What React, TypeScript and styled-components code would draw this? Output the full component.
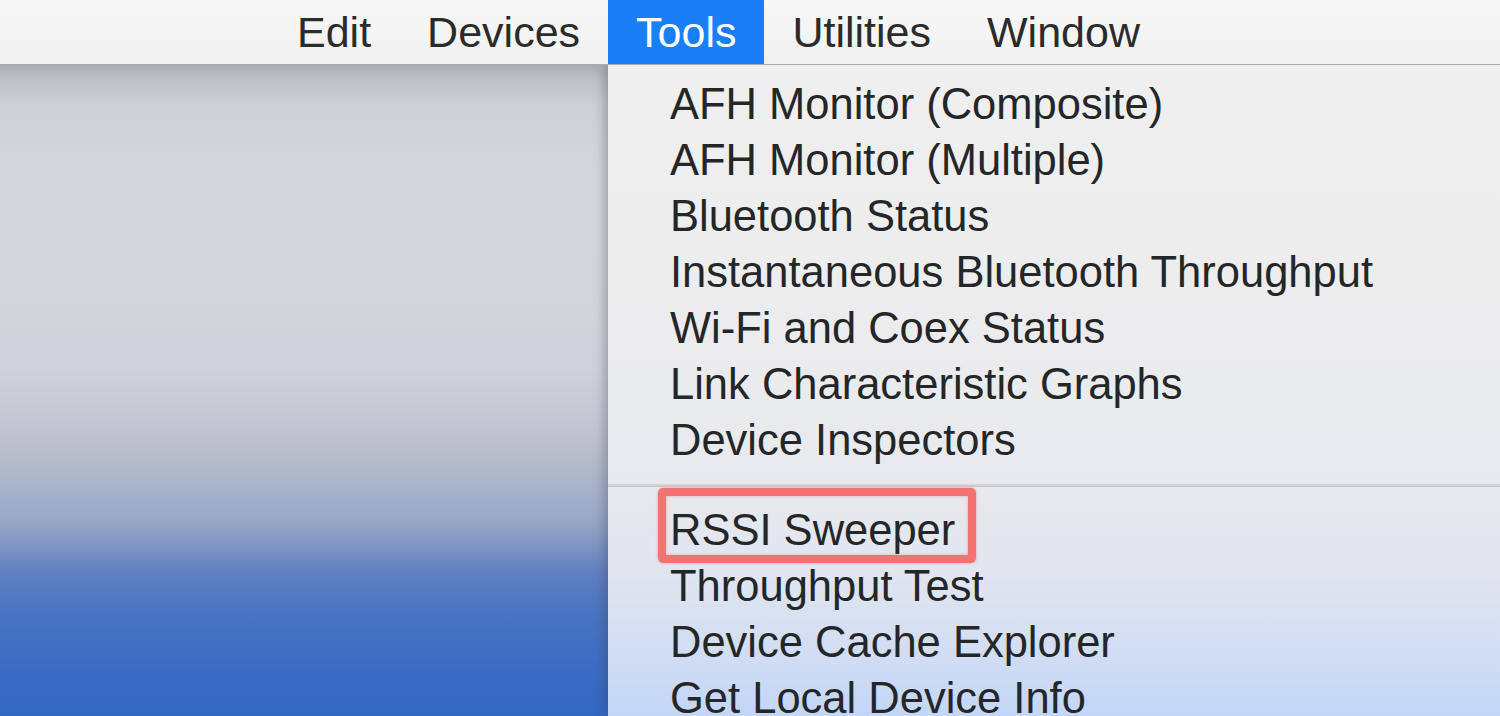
import React from "react";
import styled, { createGlobalStyle } from "styled-components";

const Global = createGlobalStyle`
  html, body { margin: 0; padding: 0; }
  body {
    width: 1500px;
    height: 716px;
    overflow: hidden;
    font-family: "Liberation Sans", Arial, Helvetica, sans-serif;
    background: #d3d5da;
  }
`;

const Screen = styled.div`
  width: 1500px;
  height: 716px;
  display: grid;
  grid-template-rows: 65px 1fr;
  overflow: hidden;
`;

const MenuBar = styled.nav`
  display: flex;
  align-items: stretch;
  padding-left: 269px;
  background: linear-gradient(#f7f7f7, #f1f1f1);
  border-bottom: 1px solid #a9a9ab;
  position: relative;
  z-index: 2;
`;

const MenuTitle = styled.div<{ $active?: boolean }>`
  padding: 0 28px;
  font-size: 43px;
  line-height: 64px;
  color: ${(p) => (p.$active ? "#ffffff" : "#2b2b2b")};
  background: ${(p) => (p.$active ? "#1a7ef5" : "transparent")};
  white-space: nowrap;
`;

const Body = styled.div`
  display: flex;
  min-height: 0;
  overflow: hidden;
`;

const Desktop = styled.div`
  flex: 0 0 608px;
  background: linear-gradient(
    to bottom,
    #abacb1 0px,
    #bfc0c4 14px,
    #cfd0d4 40px,
    #d6d7db 110px,
    #d4d6db 220px,
    #cfd2d9 300px,
    #c5c9d3 350px,
    #b8bdcb 390px,
    #a9b3c9 420px,
    #9aaac8 450px,
    #7f95c4 480px,
    #5f7fc0 509px,
    #4a74c2 548px,
    #3c6cc3 600px,
    #3268c3 651px
  );
`;

const Menu = styled.div`
  flex: 1;
  display: flex;
  flex-direction: column;
  padding-top: 11px;
  background: linear-gradient(
    to bottom,
    #efeff0 0px,
    #ededee 200px,
    #e9eaed 380px,
    #e6e8ee 450px,
    #e0e5ef 510px,
    #d5dff2 570px,
    #cadaf5 620px,
    #c3d6f7 651px
  );
  box-shadow: -4px 0 10px rgba(60, 64, 80, 0.35);
  position: relative;
  z-index: 1;
`;

const Item = styled.div`
  position: relative;
  flex: 0 0 56px;
  padding-left: 62px;
  font-size: 43.5px;
  line-height: 56px;
  color: #242628;
  white-space: nowrap;
`;

const Separator = styled.div`
  flex: 0 0 34px;
  display: flex;
  align-items: center;
  &::after {
    content: "";
    flex: 1;
    height: 3px;
    background: linear-gradient(#dadadd, #c8c8cc);
  }
`;

const Callout = styled.span`
  position: absolute;
  left: 50px;
  top: -14px;
  width: 318px;
  height: 75px;
  box-sizing: border-box;
  border: 8px solid #f37272;
  border-radius: 5px;
  box-shadow: 0 0 3px rgba(240, 100, 100, 0.6), inset 0 0 3px rgba(240, 100, 100, 0.5);
  pointer-events: none;
`;

const titles = ["Edit", "Devices", "Tools", "Utilities", "Window"];

const groupA = [
  "AFH Monitor (Composite)",
  "AFH Monitor (Multiple)",
  "Bluetooth Status",
  "Instantaneous Bluetooth Throughput",
  "Wi-Fi and Coex Status",
  "Link Characteristic Graphs",
  "Device Inspectors",
];

const groupB = [
  "RSSI Sweeper",
  "Throughput Test",
  "Device Cache Explorer",
  "Get Local Device Info",
];

export default function App() {
  return (
    <>
      <Global />
      <Screen>
        <MenuBar>
          {titles.map((t) => (
            <MenuTitle key={t} $active={t === "Tools"}>
              {t}
            </MenuTitle>
          ))}
        </MenuBar>
        <Body>
          <Desktop />
          <Menu>
            {groupA.map((t) => (
              <Item key={t}>{t}</Item>
            ))}
            <Separator />
            {groupB.map((t) => (
              <Item key={t}>
                {t}
                {t === "RSSI Sweeper" && <Callout />}
              </Item>
            ))}
          </Menu>
        </Body>
      </Screen>
    </>
  );
}
